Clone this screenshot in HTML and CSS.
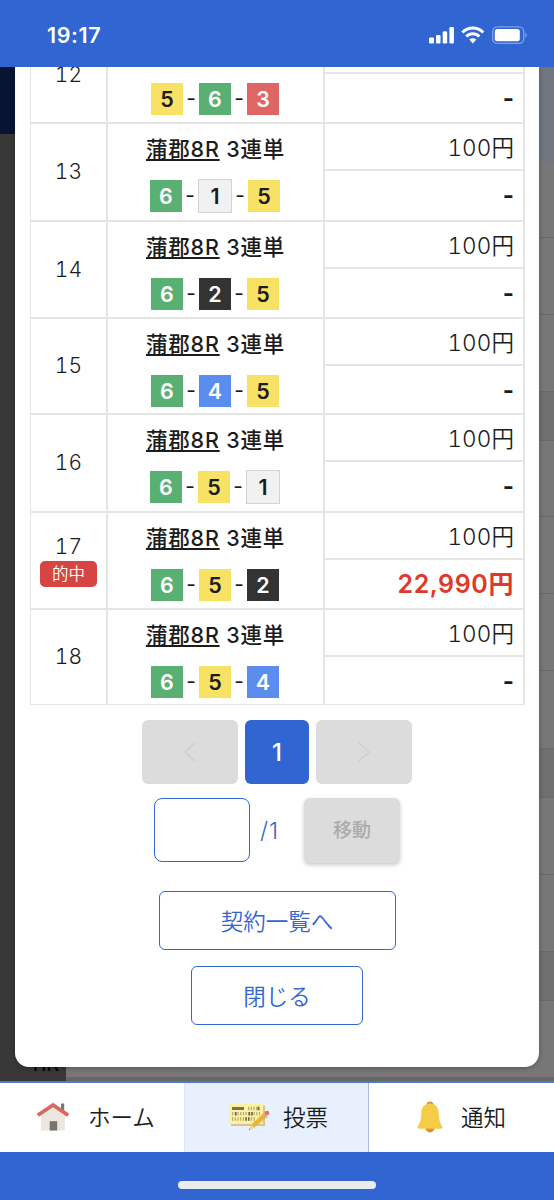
FILE: index.html
```
<!DOCTYPE html>
<html lang="ja">
<head>
<meta charset="utf-8">
<title>投票</title>
<link rel="stylesheet" href="styles.css">
</head>
<body>
<div class="screen">
  <header class="status">
    <span class="clock">19:17</span>
    <svg class="status-icons" width="102" height="20" viewBox="0 0 102 20">
      <g fill="#fff">
        <rect x="1" y="11.500" width="5" height="6" rx="1.300"/>
        <rect x="8" y="9" width="4.500" height="8.500" rx="1.300"/>
        <rect x="14.700" y="5.300" width="4.500" height="12.200" rx="1.300"/>
        <rect x="21.400" y="1" width="4.500" height="16.500" rx="1.300"/>
      </g>
      <g fill="none" stroke="#fff" stroke-width="2.900">
        <path d="M34.400 6.400a14.500 14.500 0 0 1 20.800 0"/>
        <path d="M38.300 10.500a9.200 9.200 0 0 1 13 0"/>
      </g>
      <path d="M41.300 13.600a5 5 0 0 1 7 0L44.800 17.400z" fill="#fff"/>
      <rect x="64.700" y=".9" width="31" height="16.500" rx="4.500" fill="none" stroke="#7fa0e6" stroke-width="1.400"/>
      <rect x="66.800" y="3" width="25" height="12.200" rx="2.500" fill="#fff"/>
      <path d="M97.300 6.500q3 2.600 0 5.200z" fill="#7fa0e6"/>
    </svg>
  </header>

  <main class="stage">
    <div class="behind">
      <div class="behind-left"><div class="behind-head"></div><div class="behind-name">11R</div></div>
      <div class="behind-right">
        <i class="b-head"></i><i class="b-76"></i><i class="b-77"></i><i class="b-77"></i><i class="b-band"></i><i class="b-76"></i><i class="b-77"></i><i class="b-77"></i><i class="b-78"></i><i class="b-band"></i><i class="b-77"></i><i class="b-77"></i><i class="b-band"></i><i class="b-77"></i>
      </div>
    </div>
    <section class="modal">
      <div class="bets">
        <div class="bet">
          <div class="no">12</div>
          <div class="pick"><div class="race"><u>蒲郡8R</u> 3連単</div><div class="combo"><b class="c5">5</b><i>-</i><b class="c6">6</b><i>-</i><b class="c3">3</b></div></div>
          <div class="money"><div class="stake">100円</div><div class="pay">-</div></div>
        </div>
        <div class="bet tall">
          <div class="no">13</div>
          <div class="pick"><div class="race"><u>蒲郡8R</u> 3連単</div><div class="combo"><b class="c6">6</b><i>-</i><b class="c1">1</b><i>-</i><b class="c5">5</b></div></div>
          <div class="money"><div class="stake">100円</div><div class="pay">-</div></div>
        </div>
        <div class="bet">
          <div class="no">14</div>
          <div class="pick"><div class="race"><u>蒲郡8R</u> 3連単</div><div class="combo"><b class="c6">6</b><i>-</i><b class="c2">2</b><i>-</i><b class="c5">5</b></div></div>
          <div class="money"><div class="stake">100円</div><div class="pay">-</div></div>
        </div>
        <div class="bet short">
          <div class="no">15</div>
          <div class="pick"><div class="race"><u>蒲郡8R</u> 3連単</div><div class="combo"><b class="c6">6</b><i>-</i><b class="c4">4</b><i>-</i><b class="c5">5</b></div></div>
          <div class="money"><div class="stake">100円</div><div class="pay">-</div></div>
        </div>
        <div class="bet tall">
          <div class="no">16</div>
          <div class="pick"><div class="race"><u>蒲郡8R</u> 3連単</div><div class="combo"><b class="c6">6</b><i>-</i><b class="c5">5</b><i>-</i><b class="c1">1</b></div></div>
          <div class="money"><div class="stake">100円</div><div class="pay">-</div></div>
        </div>
        <div class="bet">
          <div class="no">17<span class="hit">的中</span></div>
          <div class="pick"><div class="race"><u>蒲郡8R</u> 3連単</div><div class="combo"><b class="c6">6</b><i>-</i><b class="c5">5</b><i>-</i><b class="c2">2</b></div></div>
          <div class="money"><div class="stake">100円</div><div class="pay won">22,990円</div></div>
        </div>
        <div class="bet short">
          <div class="no">18</div>
          <div class="pick"><div class="race"><u>蒲郡8R</u> 3連単</div><div class="combo"><b class="c6">6</b><i>-</i><b class="c5">5</b><i>-</i><b class="c4">4</b></div></div>
          <div class="money"><div class="stake">100円</div><div class="pay">-</div></div>
        </div>
      </div>

      <div class="pager">
        <button class="page step"><svg width="14" height="22" viewBox="0 0 14 22"><path d="M12.500 1.500L2 11l10.500 9.500"/></svg></button>
        <button class="page current">1</button>
        <button class="page step"><svg width="14" height="22" viewBox="0 0 14 22"><path d="M1.500 1.500L12 11 1.500 20.500"/></svg></button>
      </div>
      <div class="jump">
        <input class="jump-input" type="text">
        <span class="total">/1</span>
        <button class="go">移動</button>
      </div>
      <div class="actions">
        <button class="action wide">契約一覧へ</button>
        <button class="action">閉じる</button>
      </div>
    </section>
  </main>

  <nav class="tabs">
    <a class="tab home">
      <svg width="34" height="30" viewBox="0 0 34 30">
        <path d="M25 1.500h3.200V9L25 6.500z" fill="#777"/>
        <path d="M5 12L17 4l12 8v16.500H5z" fill="#ebe7df"/>
        <rect x="13.700" y="19.200" width="7.500" height="9.300" fill="#777472"/>
        <path d="M1.800 13.300L17 3l15.200 10.300" fill="none" stroke="#d9675f" stroke-width="3.800"/>
      </svg>
      <span>ホーム</span>
    </a>
    <a class="tab vote">
      <svg width="42" height="30" viewBox="0 0 42 30">
        <path d="M3 3.500h34V24H3z" fill="#d7c48e"/>
        <path d="M1 2h34v20H1z" fill="#fbf1a3"/>
        <path d="M4 5h12v3H4z" fill="#77705a"/>
        <g fill="none" stroke="#b5aa70" stroke-width="3.300" stroke-dasharray="1.200 1.500">
          <path d="M20 6.500h12M4 11.700h28M4 17h24"/>
        </g>
        <path d="M29.500 4.800h1.500v3.400h-1.500zM7 10h1.600v3.400H7zM20.500 10h1.600v3.400h-1.600zM23.200 10h1.600v3.400h-1.600zM17.300 15.300h1.500v3.400h-1.500zM20 15.300h1.500v3.400H20z" fill="#6e694e"/>
        <path d="M21.300 27.500l1.800-4.800L36 10.500l3.600 4-13.400 11.300z" fill="#e8b441"/>
        <path d="M21.300 27.500l1.800-4.800 3.100 3.100z" fill="#f0d9a0"/>
        <path d="M21 28l.5-1.600 1 1z" fill="#555"/>
        <circle cx="39" cy="11" r="2.300" fill="#df7668"/>
        <path d="M35.800 11.500l3.500 3.700" stroke="#bbb7a5" stroke-width="1.300"/>
      </svg>
      <span>投票</span>
    </a>
    <a class="tab notice">
      <svg width="26" height="32" viewBox="0 0 26 32">
        <circle cx="13" cy="4" r="3.500" fill="#dc8d36"/>
        <circle cx="13" cy="26.800" r="4.700" fill="#dc8d36"/>
        <path d="M13 2.500c-5 0-8.300 3.500-8.600 8.500C4 18 3.700 20.500 1 25c-.9 1.600-.2 2.700 1.200 2.700h21.600c1.400 0 2.100-1.100 1.200-2.700-2.700-4.500-3-7-3.400-14C21.300 6 18 2.500 13 2.500z" fill="#f5cc45"/>
      </svg>
      <span>通知</span>
    </a>
  </nav>
  <footer class="foot"><div class="home-bar"></div></footer>
</div>
</body>
</html>
```
FILE: styles.css
```
* { box-sizing: border-box; }
body { margin: 0; font-family: Inter, "Noto Sans CJK JP", sans-serif; color: #1c1c1c; }
button, input { font: inherit; margin: 0; padding: 0; }
i { font-style: normal; }

.screen { width: 554px; height: 1200px; overflow: hidden; display: grid; grid-template-rows: 67px 1014px 71px 48px; background: #3166d2; }

.status { display: flex; justify-content: space-between; align-items: flex-start; padding: 23px 24px 0 47px; }
.clock { color: #fff; font: 600 21.500px/25px Inter, sans-serif; letter-spacing: .6px; }
.status-icons { margin-top: 3px; }

.stage { display: grid; overflow: hidden; }
.behind, .modal { grid-area: 1 / 1; }
.behind { display: flex; justify-content: space-between; background: #666; }
.behind-left { width: 66px; background: #383838; display: flex; flex-direction: column; justify-content: space-between; }
.behind-head { height: 67px; background: #081433; }
.behind-name { height: 34px; font-size: 20px; line-height: 28px; padding-left: 30px; color: #000; }
.behind-right { flex: 1; background: #777; border-bottom: 6px solid #666; }
.behind-right i { display: block; border-bottom: 1px solid #696969; }
.behind-right .b-head { height: 95px; background: #70757f; border: 0; }
.b-76 { height: 76px; }
.b-77 { height: 77px; }
.b-78 { height: 78px; }
.behind-right .b-band { height: 49px; background: #6f6f6f; }

.modal { height: 1000px; margin: 0 15px; background: #fff; border-radius: 0 0 14px 14px; overflow: hidden; box-shadow: 0 1px 5px rgba(0,0,0,.3); }
.bets { width: 495px; margin: -42px 0 0 15px; border: solid #e5e5e5; border-width: 0 2px 1px 1px; }
.bet { height: 97px; display: grid; grid-template-columns: 75px 219px 1fr; grid-template-rows: 100%; border-top: 2px solid #e5e5e5; }
.bet.tall { height: 98px; }
.bet.short { height: 96px; }
.no, .stake { font-variant-numeric: tabular-nums; }
.no { display: flex; flex-direction: column; align-items: center; justify-content: center; font-size: 21px; line-height: 24px; font-weight: 350; letter-spacing: .2px; }
.hit { width: 57px; height: 26px; margin-top: 2px; border-radius: 5px; background: #d64541; color: #fff; font-size: 16.500px; line-height: 26px; letter-spacing: 0; text-align: center; }
.pick { border: solid #e5e5e5; border-width: 0 2px; display: flex; flex-direction: column; align-items: center; padding-top: 11px; }
.race { height: 28px; font-size: 21.500px; line-height: 28px; font-weight: 500; letter-spacing: .8px; white-space: pre; }
.race u { text-underline-offset: 2px; text-decoration-thickness: 1.500px; }
.combo { height: 34px; margin-top: 16px; display: flex; align-items: center; }
.combo b { width: 32px; height: 32px; font-size: 21.500px; line-height: 32px; text-align: center; font-weight: 600; }
.combo i { width: 16px; text-align: center; font-size: 21px; line-height: 32px; }
.combo .c1 { width: 34px; height: 34px; background: #f1f1f1; border: 1px solid #d3d3d3; }
.c2 { background: #333; color: #fff; }
.c3 { background: #e06666; color: #fff; }
.c4 { background: #5a8dee; color: #fff; }
.c5 { background: #f7e266; }
.c6 { background: #5ab072; color: #fff; }
.pick .combo { margin-right: 1px; }
.stake { height: 47px; border-bottom: 2px solid #e5e5e5; padding-right: 9px; text-align: right; font-size: 22.500px; line-height: 47px; font-weight: 350; letter-spacing: .1px; }
.pay { padding-right: 9px; text-align: right; font-size: 24px; line-height: 49px; font-weight: 700; }
.won { color: #e0392a; font-size: 25px; font-weight: 600; letter-spacing: .6px; }

.pager { display: flex; justify-content: center; gap: 7px; margin-top: 15px; }
.page { width: 96px; height: 64px; border: 0; border-radius: 6px; background: #dcdcdc; display: flex; align-items: center; justify-content: center; }
.page svg { fill: none; stroke: #cfcfcf; stroke-width: 1.500; }
.page.current { width: 64px; background: #3166d2; color: #fff; font-size: 24px; font-weight: 500; }
.jump { display: flex; height: 65px; padding-left: 139px; margin-top: 14px; }
.jump-input { width: 96px; height: 64px; border: 1.500px solid #3166d2; border-radius: 8px; background: #fff; }
.total { width: 54px; padding-left: 10px; color: #3166d2; font-size: 23px; line-height: 66px; font-weight: 300; letter-spacing: 1px; }
.go { width: 96px; height: 65px; border: 0; border-radius: 6px; background: #dcdcdc; color: #ababab; font-size: 19px; font-weight: 500; line-height: 62px; box-shadow: 0 2px 4px rgba(0,0,0,.22); }
.actions { display: flex; flex-direction: column; align-items: center; gap: 16px; margin-top: 28px; }
.action { width: 172px; height: 59px; padding-bottom: 2px; border: 1px solid #3166d2; border-radius: 6px; background: #fff; color: #3166d2; font-size: 22.500px; font-weight: 350; }
.action.wide { width: 237px; }

.tabs { display: grid; grid-template-columns: 185px 184px 1fr; border-top: 2px solid #4d7acb; background: #fff; }
.tab { display: flex; align-items: center; font-size: 22.500px; font-weight: 350; line-height: 30px; padding-bottom: 1px; }
.tab span { padding-top: 1px; }
.home { padding-left: 36px; border-right: 1px solid #dfe4f0; }
.home svg { margin-right: 18px; }
.vote { padding-left: 43px; border-right: 1px solid #a9bce0; background: #e9f0fd; }
.vote svg { margin-right: 13px; }
.notice { padding-left: 48px; }
.notice svg { margin-right: 18px; }
.foot { display: flex; justify-content: center; padding-top: 29px; }
.home-bar { width: 198px; height: 8px; border-radius: 4px; background: #ececec; }
```
